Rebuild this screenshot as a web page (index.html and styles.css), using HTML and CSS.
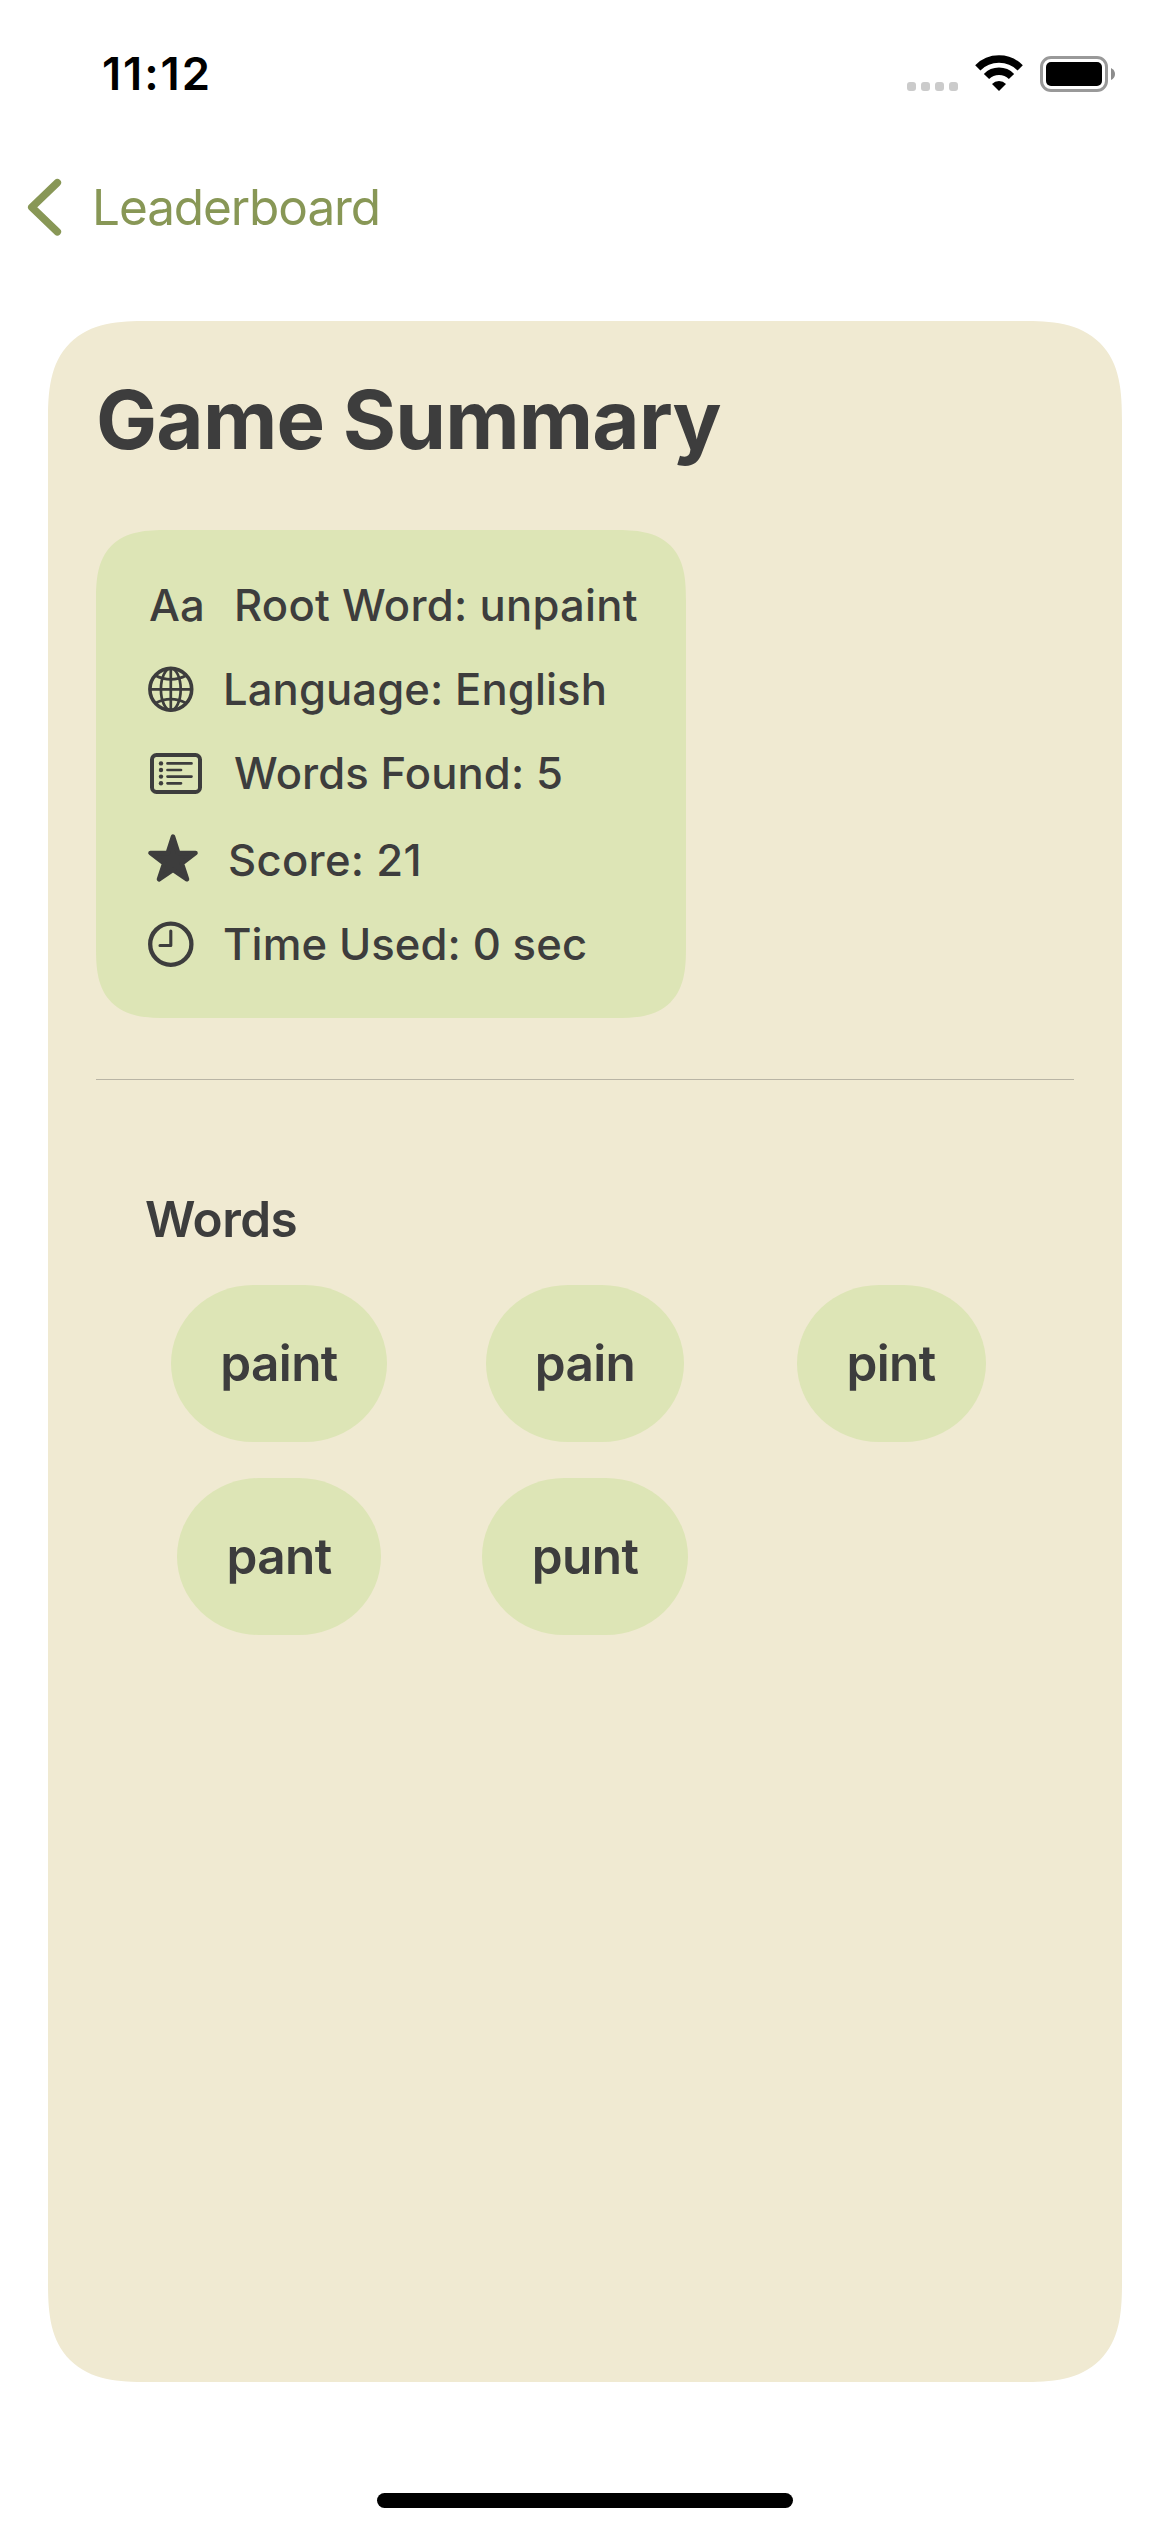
FILE: index.html
```html
<!DOCTYPE html>
<html lang="en">
<head>
<meta charset="utf-8">
<title>Game Summary</title>
<link rel="stylesheet" href="styles.css">
</head>
<body>
<div class="screen">
  <header class="status-bar">
    <span class="time">11:12</span>
    <div class="status-icons">
      <svg class="signal" width="51" height="9" viewBox="0 0 51 9"><g fill="#cbcbcb"><rect width="9" height="9" rx="3"/><rect x="14" width="9" height="9" rx="3"/><rect x="28" width="9" height="9" rx="3"/><rect x="42" width="9" height="9" rx="3"/></g></svg>
      <svg class="wifi" width="48" height="36" viewBox="0 0 48 36"><g fill="none" stroke="#000" stroke-width="7.4"><path d="M2.8 12.8A30 30 0 0 1 45.2 12.8"/><path d="M11.5 21.5A17.6 17.6 0 0 1 36.5 21.5"/></g><path d="M24 36L17 29A9.6 9.6 0 0 1 31 29Z"/></svg>
      <svg class="battery" width="76" height="36" viewBox="0 0 76 36"><rect x="1.5" y="1.5" width="65" height="33" rx="9.5" fill="none" stroke="#999" stroke-width="3"/><rect x="6" y="6" width="56" height="24" rx="5"/><path d="M71 12Q75 14 75 18T71 24Z" fill="#8c8c8c"/></svg>
    </div>
  </header>
  <nav class="nav">
    <svg class="chevron" width="36" height="60" viewBox="0 0 36 60"><path d="M31.3 5.7L5.8 30.3L31.3 54.8" fill="none" stroke="#889756" stroke-width="7.6" stroke-linecap="round" stroke-linejoin="round"/></svg>
    <span class="back-label">Leaderboard</span>
  </nav>
  <main class="card">
    <h1 class="title">Game Summary</h1>
    <ul class="stats">
      <li class="stat"><span class="icon icon-aa">Aa</span><span class="label root">Root Word: unpaint</span></li>
      <li class="stat">
        <svg class="icon" width="54" height="54" viewBox="0 0 54 54"><g fill="none" stroke="#3d3d3d" stroke-width="2.7"><circle cx="26.8" cy="27.3" r="20.9" stroke-width="3.6"/><path d="M26.8 6V48.6M6 27.3H47.6"/><ellipse cx="26.8" cy="27.3" rx="9.9" ry="20.9"/><path d="M11 13.2Q26.8 21.6 42.6 13.2M11 41.4Q26.8 33 42.6 41.4"/></g></svg>
        <span class="label language">Language: English</span></li>
      <li class="stat">
        <svg class="icon" width="65" height="54" viewBox="0 0 65 54"><g fill="none" stroke="#3d3d3d" stroke-width="2.7" stroke-linecap="round"><rect x="8" y="9" width="48" height="37" rx="4.5" stroke-width="4"/><path d="M23.5 17.4H47.5M23.5 24H37M23.5 30.6H47.5M23.5 37.3H37"/></g><g fill="#3d3d3d"><circle cx="17" cy="17.4" r="2.2"/><circle cx="17" cy="24" r="2.2"/><circle cx="17" cy="30.6" r="2.2"/><circle cx="17" cy="37.3" r="2.2"/></g></svg>
        <span class="label found">Words Found: 5</span></li>
      <li class="stat stat-score">
        <svg class="icon" width="59" height="57" viewBox="0 0 59 57"><path d="M29 6.7L34.2 23H51.5L37.8 33.4L43 49.3L29 39.8L15 49.3L20.2 33.4L6.5 23H23.8Z" fill="#3d3d3d" stroke="#3d3d3d" stroke-width="4.6" stroke-linejoin="round"/></svg>
        <span class="label score">Score: 21</span></li>
      <li class="stat">
        <svg class="icon" width="54" height="54" viewBox="0 0 54 54"><g fill="none" stroke="#3d3d3d" stroke-linecap="round" stroke-linejoin="round"><circle cx="26.8" cy="27.2" r="20.6" stroke-width="4.3"/><path d="M26.8 14V28.5H16" stroke-width="3.1"/></g></svg>
        <span class="label used">Time Used: 0 sec</span></li>
    </ul>
    <hr class="divider">
    <h2 class="words-title">Words</h2>
    <div class="words">
      <span class="word w-paint">paint</span>
      <span class="word w-pain">pain</span>
      <span class="word w-pint">pint</span>
      <span class="word w-pant">pant</span>
      <span class="word w-punt">punt</span>
    </div>
  </main>
  <div class="home-indicator"></div>
</div>
</body>
</html>
```
FILE: styles.css
```css
* { box-sizing: border-box; margin: 0; padding: 0; }

body {
  background: #fff;
  color: #3d3d3d;
  font-family: Inter, "Liberation Sans", sans-serif;
}

svg { display: block; flex: none; }

.screen {
  width: 1170px;
  height: 2532px;
  display: flex;
  flex-direction: column;
  overflow: hidden;
}

/* Status bar */
.status-bar {
  height: 141px;
  padding: 0 54px 0 102px;
  display: flex;
  justify-content: space-between;
}

.time {
  margin-top: 44px;
  font-size: 45.4px;
  line-height: 60px;
  font-weight: 600;
  letter-spacing: 1.9px;
  color: #000;
}

.status-icons { display: flex; align-items: flex-start; }
.signal { margin-top: 82px; }
.wifi { margin: 55px 17px 0; }
.battery { margin-top: 56px; }

/* Navigation */
.nav {
  height: 132px;
  padding-left: 26px;
  display: flex;
  align-items: center;
  color: #889756;
}

.back-label {
  margin-left: 30px;
  font-size: 49.5px;
  line-height: 60px;
  letter-spacing: -1.1px;
}

/* Summary card */
.card {
  width: 1074px;
  height: 2061px;
  margin: 48px 48px 0;
  padding: 0 48px;
  background: #f0ead2;
  border-radius: 75px;
  display: flex;
  flex-direction: column;
}

.title {
  margin-top: 48px;
  height: 101px;
  font-size: 81.5px;
  line-height: 101px;
  font-weight: 700;
  letter-spacing: -0.8px;
  white-space: nowrap;
}

.stats {
  list-style: none;
  width: 590px;
  height: 488px;
  margin-top: 60px;
  padding: 48px;
  background: #dde5b6;
  border-radius: 53px;
  display: flex;
  flex-direction: column;
  gap: 30px;
}

.stat {
  height: 54px;
  display: flex;
  align-items: center;
  gap: 25px;
}

.icon-aa {
  width: 65px;
  padding: 2px 0 0 5px;
  font-size: 43.6px;
  line-height: 54px;
  font-weight: 500;
}

.label {
  padding-top: 2px;
  font-size: 43.6px;
  line-height: 54px;
  font-weight: 500;
  white-space: nowrap;
  letter-spacing: 0.1px;
}

.root { letter-spacing: 0.28px; }
.score { letter-spacing: 0.3px; }
.stat-score { height: 57px; }
.stat-score .label { padding-top: 4px; }

.divider {
  width: 978px;
  height: 1px;
  margin-top: 61px;
  border: 0;
  background: #b9b5a5;
}

.words-title {
  margin: 109px 0 0 49px;
  font-size: 49.5px;
  line-height: 60px;
  font-weight: 600;
  letter-spacing: -0.5px;
}

.words {
  margin: 36px 48px 0;
  display: grid;
  grid-template-columns: repeat(3, 1fr);
  grid-auto-rows: 157px;
  gap: 36px;
  justify-items: center;
}

.word {
  height: 157px;
  border-radius: 82px / 78.5px;
  background: #dde5b6;
  font-size: 49.5px;
  line-height: 157px;
  font-weight: 600;
  letter-spacing: -0.6px;
  text-align: center;
}

.w-paint { width: 216px; }
.w-pain { width: 198px; }
.w-pint { width: 189px; }
.w-pant { width: 204px; }
.w-punt { width: 206px; }

/* Continuous corners */
@supports (corner-shape: squircle) {
  .card { border-radius: 100px; corner-shape: superellipse(1.48); }
  .stats { border-radius: 71px; corner-shape: superellipse(1.48); }
}

.home-indicator {
  width: 416px;
  height: 15px;
  margin: 111px auto 0;
  border-radius: 8px;
  background: #000;
}
```
